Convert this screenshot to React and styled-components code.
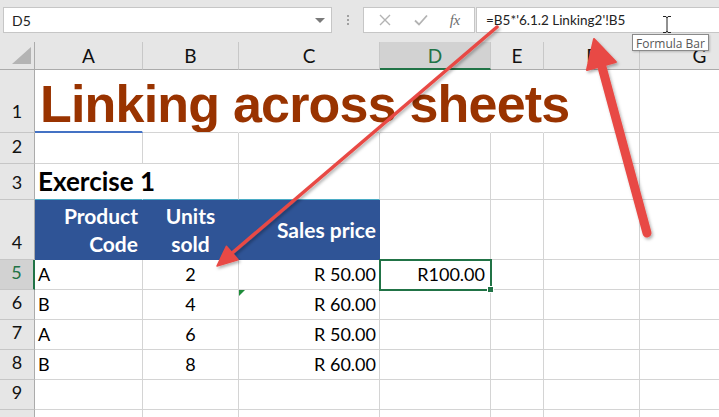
import React from 'react';
import styled, { createGlobalStyle } from 'styled-components';

const GlobalStyle = createGlobalStyle`
  html, body {
    margin: 0;
    padding: 0;
    background: #fff;
    overflow: hidden;
  }
  body {
    font-family: Lato, "Open Sans", sans-serif;
  }
`;

const Screen = styled.div`
  position: relative;
  width: 719px;
  height: 417px;
  overflow: hidden;
  background: #fff;
`;

/* ---------- formula bar ---------- */

const Toolbar = styled.div`
  display: flex;
  align-items: flex-start;
  height: 42px;
  padding: 7px 0 0 3px;
  box-sizing: border-box;
  background: #e6e6e6;
  overflow: hidden;
`;

const NameBox = styled.div`
  display: flex;
  align-items: center;
  justify-content: space-between;
  flex: none;
  width: 329px;
  height: 26px;
  box-sizing: border-box;
  padding: 0 6px 0 8px;
  background: #fff;
  border: 1px solid #c6c6c6;
  font: 14px Lato, sans-serif;
  color: #222;
`;

const DropArrow = styled.span`
  width: 0;
  height: 0;
  border-left: 5px solid transparent;
  border-right: 5px solid transparent;
  border-top: 5px solid #7a7a7a;
`;

const Grip = styled.div`
  display: flex;
  flex-direction: column;
  align-items: center;
  justify-content: center;
  gap: 2px;
  flex: none;
  width: 31px;
  height: 26px;

  span {
    width: 2px;
    height: 2px;
    background: #a0a0a0;
  }
`;

const ButtonGroup = styled.div`
  display: flex;
  align-items: center;
  justify-content: space-around;
  flex: none;
  width: 112px;
  height: 26px;
  box-sizing: border-box;
  margin-right: 1px;
  padding: 0 4px;
  background: #fff;
  border: 1px solid #c6c6c6;
`;

const FxLabel = styled.span`
  font: italic 15px "Liberation Serif", serif;
  color: #6d6d6d;
  letter-spacing: -0.5px;
`;

const FormulaInput = styled.div`
  display: flex;
  align-items: center;
  flex: none;
  width: 280px;
  height: 26px;
  box-sizing: border-box;
  padding-left: 9px;
  background: #fff;
  border: 1px solid #c6c6c6;
  font: 13.5px Lato, sans-serif;
  color: #222;
`;

/* ---------- sheet grid ---------- */

const Sheet = styled.div`
  display: grid;
  grid-template-columns: 35px 108px 96px 141px 111px 53px 96px 120px;
  grid-template-rows: 28px 63px 31px 36px 60px repeat(6, 30px);
  font-family: Lato, "Open Sans", sans-serif;
`;

const Corner = styled.div`
  position: relative;
  background: #e6e6e6;
  border-right: 1px solid #ababab;
  border-bottom: 1px solid #ababab;
  box-sizing: border-box;

  &::after {
    content: '';
    position: absolute;
    right: 3px;
    bottom: 5px;
    width: 19px;
    height: 17px;
    background: #b4b4b4;
    clip-path: polygon(100% 0, 100% 100%, 0 100%);
  }
`;

const ColHead = styled.div`
  display: flex;
  align-items: center;
  justify-content: center;
  box-sizing: border-box;
  background: ${p => (p.$active ? '#d2d2d2' : '#e6e6e6')};
  color: ${p => (p.$active ? '#217346' : '#111')};
  border-right: 1px solid #c8c8c8;
  border-bottom: ${p => (p.$active ? '2px solid #217346' : '1px solid #ababab')};
  font-size: 19px;
`;

const RowHead = styled.div`
  display: flex;
  align-items: flex-end;
  justify-content: center;
  box-sizing: border-box;
  padding-bottom: ${p => p.$pb || 5}px;
  background: ${p => (p.$active ? '#d2d2d2' : '#e6e6e6')};
  color: ${p => (p.$active ? '#217346' : '#111')};
  border-right: ${p => (p.$active ? '2px solid #217346' : '1px solid #ababab')};
  border-bottom: 1px solid #c6c6c6;
  font-size: 18px;
  line-height: 1.2;
`;

const Cell = styled.div`
  position: relative;
  display: flex;
  align-items: flex-end;
  justify-content: ${p =>
    p.$align === 'right' ? 'flex-end' : p.$align === 'center' ? 'center' : 'flex-start'};
  box-sizing: border-box;
  padding: 0 ${p => p.$pr ?? 3}px 3px 3px;
  border-right: 1px solid ${p => (p.$noRight ? 'transparent' : '#d4d4d4')};
  border-bottom: 1px solid ${p => p.$bottom || '#d4d4d4'};
  white-space: nowrap;
  font-size: 18px;
  line-height: 1.2;
  color: #000;

  ${p =>
    p.$flag &&
    `
    &::before {
      content: '';
      position: absolute;
      left: 0;
      top: 0;
      border-top: 6px solid #1e8c3a;
      border-right: 6px solid transparent;
    }
  `}
`;

const TitleCell = styled(Cell)`
  padding: 0 0 1px 5px;
  border-bottom: 2px solid #4472c4;
  border-right-color: transparent;
  font: bold 52px "Liberation Sans", Arial, sans-serif;
  letter-spacing: -0.8px;
  line-height: 1;
  color: #993300;
`;

const ExerciseCell = styled(Cell)`
  padding-bottom: 2px;
  font-size: 26px;
  font-weight: bold;
`;

const HeadCell = styled(Cell)`
  align-items: center;
  justify-content: ${p =>
    p.$align === 'right' ? 'flex-end' : p.$align === 'center' ? 'center' : 'flex-start'};
  padding: 0 ${p => p.$pr ?? 4}px 0 4px;
  background: #2f5496;
  border-right-color: #2f5496;
  border-bottom-color: #2f5496;
  color: #fff;
  font-size: 21px;
  font-weight: bold;
  line-height: 28px;
  text-align: ${p => p.$align || 'left'};
`;

const SelectedCell = styled(Cell)`
  z-index: 1;
  outline: 2px solid #217346;
  outline-offset: -1px;

  &::after {
    content: '';
    position: absolute;
    right: -4px;
    bottom: -4px;
    width: 5px;
    height: 5px;
    background: #217346;
    border: 1px solid #fff;
  }
`;

/* ---------- overlays ---------- */

const Overlay = styled.svg`
  position: absolute;
  left: 0;
  top: 0;
  width: 719px;
  height: 417px;
  pointer-events: none;
  z-index: 5;
`;

const Tooltip = styled.div`
  position: absolute;
  left: 632px;
  top: 34px;
  z-index: 6;
  padding: 0 3px;
  height: 17px;
  line-height: 16px;
  box-sizing: border-box;
  background: #fff;
  border: 1px solid #8a8a8a;
  box-shadow: 1px 1px 2px rgba(0, 0, 0, 0.2);
  font: 12px "Open Sans", sans-serif;
  color: #575757;
  white-space: nowrap;
`;

const columns = ['A', 'B', 'C', 'D', 'E', 'F', 'G'];

const data = [
  { row: 5, code: 'A', units: '2', price: 'R 50.00' },
  { row: 6, code: 'B', units: '4', price: 'R 60.00' },
  { row: 7, code: 'A', units: '6', price: 'R 50.00' },
  { row: 8, code: 'B', units: '8', price: 'R 60.00' },
];

const Blanks = ({ count }) => Array.from({ length: count }, (_, i) => <Cell key={i} />);

export default function App() {
  return (
    <Screen>
      <GlobalStyle />

      <Toolbar>
        <NameBox>
          D5
          <DropArrow />
        </NameBox>
        <Grip>
          <span />
          <span />
          <span />
        </Grip>
        <ButtonGroup>
          <svg width="14" height="14" viewBox="0 0 14 14">
            <path d="M2 2 L12 12 M12 2 L2 12" stroke="#b3b3b3" strokeWidth="1.4" fill="none" />
          </svg>
          <svg width="16" height="14" viewBox="0 0 16 14">
            <path d="M2 7.5 L6 11.5 L14 2.5" stroke="#b3b3b3" strokeWidth="1.8" fill="none" />
          </svg>
          <FxLabel>fx</FxLabel>
        </ButtonGroup>
        <FormulaInput>=B5*'6.1.2 Linking2'!B5</FormulaInput>
      </Toolbar>

      <Sheet>
        <Corner />
        {columns.map(c => (
          <ColHead key={c} $active={c === 'D'}>
            {c}
          </ColHead>
        ))}

        {/* row 1 */}
        <RowHead $pb={9}>1</RowHead>
        <TitleCell>Linking across sheets</TitleCell>
        <Cell $noRight />
        <Cell $noRight />
        <Cell $noRight />
        <Cell $noRight />
        <Cell />
        <Cell />

        {/* row 2 */}
        <RowHead>2</RowHead>
        <Blanks count={7} />

        {/* row 3 */}
        <RowHead>3</RowHead>
        <ExerciseCell $noRight $bottom="#4bacc6">Exercise 1</ExerciseCell>
        <Cell $bottom="#4bacc6" />
        <Cell $bottom="#4bacc6" />
        <Blanks count={4} />

        {/* row 4 */}
        <RowHead>4</RowHead>
        <HeadCell $align="right">
          Product
          <br />
          Code
        </HeadCell>
        <HeadCell $align="center">
          Units
          <br />
          sold
        </HeadCell>
        <HeadCell $align="right" $pr={3}>
          Sales price
        </HeadCell>
        <Blanks count={4} />

        {/* rows 5 - 8 */}
        {data.map(d => (
          <React.Fragment key={d.row}>
            <RowHead $active={d.row === 5}>{d.row}</RowHead>
            <Cell>{d.code}</Cell>
            <Cell $align="center">{d.units}</Cell>
            <Cell $align="right" $flag={d.row === 6}>
              {d.price}
            </Cell>
            {d.row === 5 ? (
              <SelectedCell $align="right" $pr={5}>
                R100.00
              </SelectedCell>
            ) : (
              <Cell />
            )}
            <Blanks count={3} />
          </React.Fragment>
        ))}

        {/* rows 9 - 10 */}
        <RowHead>9</RowHead>
        <Blanks count={7} />
        <RowHead />
        <Blanks count={7} />
      </Sheet>

      <Overlay viewBox="0 0 719 417">
        <defs>
          <filter id="arrowShadow" x="-20%" y="-20%" width="140%" height="140%">
            <feDropShadow dx="1.5" dy="2" stdDeviation="1.6" floodColor="#000" floodOpacity="0.3" />
          </filter>
        </defs>
        <g filter="url(#arrowShadow)" fill="#e84a45" stroke="#e84a45" strokeLinejoin="round">
          <line x1="497" y1="27" x2="231" y2="254" strokeWidth="3.5" strokeLinecap="round" />
          <polygon points="217,266 238,259.8 226.4,246.2" strokeWidth="1.5" />
          <line x1="647" y1="233" x2="602" y2="67" strokeWidth="9" strokeLinecap="round" />
          <polygon points="594,39 615.9,62 586.9,70" strokeWidth="2" />
        </g>
        <path
          d="M663 16.5 H666 M668 16.5 H671 M667 17 V32 M663 32.5 H666 M668 32.5 H671 M666 17 L667 17.5 L668 17 M666 32 L667 31.5 L668 32"
          stroke="#222"
          strokeWidth="1"
          fill="none"
        />
      </Overlay>
      <Tooltip>Formula Bar</Tooltip>
    </Screen>
  );
}
